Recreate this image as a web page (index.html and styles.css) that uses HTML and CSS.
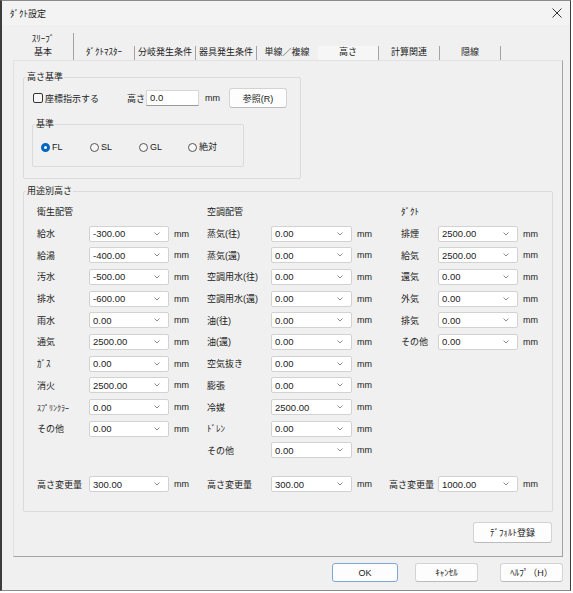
FILE: index.html
```html
<!DOCTYPE html>
<html lang="ja">
<head>
  <meta charset="UTF-8">
  <title>ﾀﾞｸﾄ設定</title>
  <link rel="stylesheet" href="styles.css">
</head>
<body>
<div class="window">
  <div class="titlebar">
    <span class="title">ﾀﾞｸﾄ設定</span>
    <svg class="close" width="10" height="10" viewBox="0 0 10 10">
      <path d="M0.5 0.5L9.5 9.5M9.5 0.5L0.5 9.5" stroke="#333" stroke-width="1" fill="none"/>
    </svg>
  </div>

  <div class="dialog">
    <div class="tabs">
      <div class="tab-row upper">
        <div class="tab">ｽﾘｰﾌﾞ</div>
      </div>
      <div class="tab-row lower">
        <div class="tab">基本</div>
        <div class="tab">ﾀﾞｸﾄﾏｽﾀｰ</div>
        <div class="tab">分岐発生条件</div>
        <div class="tab">器具発生条件</div>
        <div class="tab no-sep">単線／複線</div>
        <div class="tab active">高さ</div>
        <div class="tab">計算関連</div>
        <div class="tab">隠線</div>
      </div>
    </div>

    <div class="panel">
      <fieldset class="group base-group">
        <legend>高さ基準</legend>
        <div class="base-row">
          <label class="check"><span class="box"></span>座標指示する</label>
          <span class="height-label">高さ</span>
          <div class="text-input">0.0</div>
          <span class="unit wide">mm</span>
          <button class="btn ref-btn">参照(R)</button>
        </div>
        <fieldset class="group ref-group">
          <legend>基準</legend>
          <div class="radios">
            <span class="radio checked"><i></i>FL</span>
            <span class="radio"><i></i>SL</span>
            <span class="radio"><i></i>GL</span>
            <span class="radio"><i></i>絶対</span>
          </div>
        </fieldset>
      </fieldset>

      <fieldset class="group usage-group">
        <legend>用途別高さ</legend>
        <div class="columns">
          <div class="col col-1">
            <div class="row head">衛生配管</div>
            <div class="row"><span class="lbl">給水</span><div class="combo"><span>-300.00</span><svg width="6" height="4"><path d="M0.5 0.5L3 3L5.5 0.5" stroke="#8c8c8c" fill="none"/></svg></div><span class="unit">mm</span></div>
            <div class="row"><span class="lbl">給湯</span><div class="combo"><span>-400.00</span><svg width="6" height="4"><path d="M0.5 0.5L3 3L5.5 0.5" stroke="#8c8c8c" fill="none"/></svg></div><span class="unit">mm</span></div>
            <div class="row"><span class="lbl">汚水</span><div class="combo"><span>-500.00</span><svg width="6" height="4"><path d="M0.5 0.5L3 3L5.5 0.5" stroke="#8c8c8c" fill="none"/></svg></div><span class="unit">mm</span></div>
            <div class="row"><span class="lbl">排水</span><div class="combo"><span>-600.00</span><svg width="6" height="4"><path d="M0.5 0.5L3 3L5.5 0.5" stroke="#8c8c8c" fill="none"/></svg></div><span class="unit">mm</span></div>
            <div class="row"><span class="lbl">雨水</span><div class="combo"><span>0.00</span><svg width="6" height="4"><path d="M0.5 0.5L3 3L5.5 0.5" stroke="#8c8c8c" fill="none"/></svg></div><span class="unit">mm</span></div>
            <div class="row"><span class="lbl">通気</span><div class="combo"><span>2500.00</span><svg width="6" height="4"><path d="M0.5 0.5L3 3L5.5 0.5" stroke="#8c8c8c" fill="none"/></svg></div><span class="unit">mm</span></div>
            <div class="row"><span class="lbl">ｶﾞｽ</span><div class="combo"><span>0.00</span><svg width="6" height="4"><path d="M0.5 0.5L3 3L5.5 0.5" stroke="#8c8c8c" fill="none"/></svg></div><span class="unit">mm</span></div>
            <div class="row"><span class="lbl">消火</span><div class="combo"><span>2500.00</span><svg width="6" height="4"><path d="M0.5 0.5L3 3L5.5 0.5" stroke="#8c8c8c" fill="none"/></svg></div><span class="unit">mm</span></div>
            <div class="row"><span class="lbl small">ｽﾌﾟﾘﾝｸﾗｰ</span><div class="combo"><span>0.00</span><svg width="6" height="4"><path d="M0.5 0.5L3 3L5.5 0.5" stroke="#8c8c8c" fill="none"/></svg></div><span class="unit">mm</span></div>
            <div class="row"><span class="lbl">その他</span><div class="combo"><span>0.00</span><svg width="6" height="4"><path d="M0.5 0.5L3 3L5.5 0.5" stroke="#8c8c8c" fill="none"/></svg></div><span class="unit">mm</span></div>
          </div>

          <div class="col col-2">
            <div class="row head">空調配管</div>
            <div class="row"><span class="lbl">蒸気(往)</span><div class="combo"><span>0.00</span><svg width="6" height="4"><path d="M0.5 0.5L3 3L5.5 0.5" stroke="#8c8c8c" fill="none"/></svg></div><span class="unit">mm</span></div>
            <div class="row"><span class="lbl">蒸気(還)</span><div class="combo"><span>0.00</span><svg width="6" height="4"><path d="M0.5 0.5L3 3L5.5 0.5" stroke="#8c8c8c" fill="none"/></svg></div><span class="unit">mm</span></div>
            <div class="row"><span class="lbl">空調用水(往)</span><div class="combo"><span>0.00</span><svg width="6" height="4"><path d="M0.5 0.5L3 3L5.5 0.5" stroke="#8c8c8c" fill="none"/></svg></div><span class="unit">mm</span></div>
            <div class="row"><span class="lbl">空調用水(還)</span><div class="combo"><span>0.00</span><svg width="6" height="4"><path d="M0.5 0.5L3 3L5.5 0.5" stroke="#8c8c8c" fill="none"/></svg></div><span class="unit">mm</span></div>
            <div class="row"><span class="lbl">油(往)</span><div class="combo"><span>0.00</span><svg width="6" height="4"><path d="M0.5 0.5L3 3L5.5 0.5" stroke="#8c8c8c" fill="none"/></svg></div><span class="unit">mm</span></div>
            <div class="row"><span class="lbl">油(還)</span><div class="combo"><span>0.00</span><svg width="6" height="4"><path d="M0.5 0.5L3 3L5.5 0.5" stroke="#8c8c8c" fill="none"/></svg></div><span class="unit">mm</span></div>
            <div class="row"><span class="lbl">空気抜き</span><div class="combo"><span>0.00</span><svg width="6" height="4"><path d="M0.5 0.5L3 3L5.5 0.5" stroke="#8c8c8c" fill="none"/></svg></div><span class="unit">mm</span></div>
            <div class="row"><span class="lbl">膨張</span><div class="combo"><span>0.00</span><svg width="6" height="4"><path d="M0.5 0.5L3 3L5.5 0.5" stroke="#8c8c8c" fill="none"/></svg></div><span class="unit">mm</span></div>
            <div class="row"><span class="lbl">冷媒</span><div class="combo"><span>2500.00</span><svg width="6" height="4"><path d="M0.5 0.5L3 3L5.5 0.5" stroke="#8c8c8c" fill="none"/></svg></div><span class="unit">mm</span></div>
            <div class="row"><span class="lbl">ﾄﾞﾚﾝ</span><div class="combo"><span>0.00</span><svg width="6" height="4"><path d="M0.5 0.5L3 3L5.5 0.5" stroke="#8c8c8c" fill="none"/></svg></div><span class="unit">mm</span></div>
            <div class="row"><span class="lbl">その他</span><div class="combo"><span>0.00</span><svg width="6" height="4"><path d="M0.5 0.5L3 3L5.5 0.5" stroke="#8c8c8c" fill="none"/></svg></div><span class="unit">mm</span></div>
          </div>

          <div class="col col-3">
            <div class="row head">ﾀﾞｸﾄ</div>
            <div class="row"><span class="lbl">排煙</span><div class="combo"><span>2500.00</span><svg width="6" height="4"><path d="M0.5 0.5L3 3L5.5 0.5" stroke="#8c8c8c" fill="none"/></svg></div><span class="unit">mm</span></div>
            <div class="row"><span class="lbl">給気</span><div class="combo"><span>2500.00</span><svg width="6" height="4"><path d="M0.5 0.5L3 3L5.5 0.5" stroke="#8c8c8c" fill="none"/></svg></div><span class="unit">mm</span></div>
            <div class="row"><span class="lbl">還気</span><div class="combo"><span>0.00</span><svg width="6" height="4"><path d="M0.5 0.5L3 3L5.5 0.5" stroke="#8c8c8c" fill="none"/></svg></div><span class="unit">mm</span></div>
            <div class="row"><span class="lbl">外気</span><div class="combo"><span>0.00</span><svg width="6" height="4"><path d="M0.5 0.5L3 3L5.5 0.5" stroke="#8c8c8c" fill="none"/></svg></div><span class="unit">mm</span></div>
            <div class="row"><span class="lbl">排気</span><div class="combo"><span>0.00</span><svg width="6" height="4"><path d="M0.5 0.5L3 3L5.5 0.5" stroke="#8c8c8c" fill="none"/></svg></div><span class="unit">mm</span></div>
            <div class="row"><span class="lbl">その他</span><div class="combo"><span>0.00</span><svg width="6" height="4"><path d="M0.5 0.5L3 3L5.5 0.5" stroke="#8c8c8c" fill="none"/></svg></div><span class="unit">mm</span></div>
          </div>
        </div>

        <div class="change-row">
          <div class="row change-1"><span class="lbl">高さ変更量</span><div class="combo"><span>300.00</span><svg width="6" height="4"><path d="M0.5 0.5L3 3L5.5 0.5" stroke="#8c8c8c" fill="none"/></svg></div><span class="unit">mm</span></div>
          <div class="row change-2"><span class="lbl">高さ変更量</span><div class="combo"><span>300.00</span><svg width="6" height="4"><path d="M0.5 0.5L3 3L5.5 0.5" stroke="#8c8c8c" fill="none"/></svg></div><span class="unit">mm</span></div>
          <div class="row change-3"><span class="lbl">高さ変更量</span><div class="combo"><span>1000.00</span><svg width="6" height="4"><path d="M0.5 0.5L3 3L5.5 0.5" stroke="#8c8c8c" fill="none"/></svg></div><span class="unit">mm</span></div>
        </div>
      </fieldset>

      <div class="panel-foot">
        <button class="btn default-btn">ﾃﾞﾌｫﾙﾄ登録</button>
      </div>
    </div>

    <div class="dialog-buttons">
      <button class="btn ok-btn">OK</button>
      <button class="btn cancel-btn">ｷｬﾝｾﾙ</button>
      <button class="btn help-btn">ﾍﾙﾌﾟ（H）</button>
    </div>
  </div>
</div>
</body>
</html>
```

FILE: styles.css
```css
* {
  margin: 0;
  padding: 0;
  box-sizing: border-box;
}

body {
  margin: 0;
  background: #ffffff;
  font-family: "Liberation Sans", "Noto Sans CJK JP", sans-serif;
  font-size: 9px;
  color: #222;
}

.window {
  width: 571px;
  height: 591px;
  background: #f0f0f0;
  border: 1px solid #8a8a8a;
  border-left: 2px solid #3c3c3c;
  border-right-color: #3c3c3c;
  display: flex;
  flex-direction: column;
}

.titlebar {
  height: 24px;
  flex-shrink: 0;
  display: flex;
  align-items: center;
  justify-content: space-between;
  padding: 0 8px;
  background: #f3f3f3;
}

.close {
  display: block;
}

.dialog {
  flex: 1;
  display: flex;
  flex-direction: column;
  padding: 8px 7px 0 11px;
}

/* tabs */
.tab-row {
  display: flex;
}

.tab-row.upper {
  height: 13px;
}

.tab-row.lower {
  height: 14px;
}

.tab {
  width: 61px;
  text-align: center;
  line-height: 12px;
  border-right: 1px solid #a3a3a3;
}

.tab-row.lower .tab {
  line-height: 13px;
}

.tab.no-sep {
  border-right-color: transparent;
}

.tab.active {
  background: #f6f6f6;
}

/* panel */
.panel {
  height: 497px;
  display: flex;
  flex-direction: column;
  border: 1px solid #e2e2e2;
  border-right-color: #a3a3a3;
  border-bottom-color: #a3a3a3;
  padding: 10px 9px 0;
}

fieldset.group {
  border: 1px solid #dadada;
  border-radius: 2px;
  padding: 0;
  min-width: 0;
}

legend {
  margin-left: 2px;
  padding: 0 1px;
  line-height: 12px;
}

.base-group {
  width: 278px;
  padding-bottom: 11px !important;
}

.base-row {
  display: flex;
  align-items: center;
  height: 20px;
  margin-top: 5px;
  padding-left: 9px;
}

.check {
  width: 94px;
  display: flex;
  align-items: center;
}

.box {
  width: 10px;
  height: 10px;
  margin-right: 2px;
  border: 1px solid #333;
  border-radius: 2px;
  background: #f6f6f6;
}

.height-label {
  width: 19px;
}

.text-input {
  width: 53px;
  height: 16px;
  padding: 0 3px;
  line-height: 14px;
  font-size: 9.5px;
  background: #fff;
  border: 1px solid #d6d6d6;
  border-bottom-color: #9a9a9a;
}

.unit {
  margin-left: 5px;
}

.unit.wide {
  margin-left: 6px;
  width: 24px;
}

.ref-group {
  width: 212px;
  margin: 10px 0 0 8px;
}

.radios {
  display: flex;
  padding: 11px 0 13px 8px;
}

.radio {
  width: 49px;
  display: flex;
  align-items: center;
  line-height: 12px;
}

.radio i {
  width: 9px;
  height: 9px;
  margin-right: 2px;
  border: 1px solid #555;
  border-radius: 50%;
  background: #f6f6f6;
}

.radio.checked i {
  border: 3px solid #0067c0;
  background: #fff;
}

/* usage heights */
.usage-group {
  margin-top: 6px;
  padding: 4px 0 16px 0 !important;
}

.columns {
  display: flex;
  padding-left: 13px;
}

.col {
  display: grid;
  grid-auto-rows: 21.7px;
}

.col-1 {
  width: 170px;
  --lw: 52px;
}

.col-2 {
  width: 194px;
  --lw: 64px;
}

.col-3 {
  --lw: 37px;
}

.row {
  display: flex;
  align-items: center;
}

.row .lbl {
  width: var(--lw);
  white-space: nowrap;
}

.lbl.small {
  font-size: 8px;
}

.combo {
  width: 80px;
  height: 16px;
  display: flex;
  align-items: center;
  justify-content: space-between;
  padding: 0 8px 0 3px;
  font-size: 9.5px;
  background: #fff;
  border: 1px solid #d2d2d2;
  border-radius: 2px;
}

.col-2 .combo,
.change-2 .combo {
  width: 81px;
}

.combo svg {
  display: block;
}

.change-row {
  display: flex;
  height: 21.7px;
  margin-top: 12px;
  padding-left: 13px;
}

.change-1 {
  width: 170px;
  --lw: 52px;
}

.change-2 {
  width: 182px;
  --lw: 64px;
}

.change-3 {
  --lw: 49px;
}

.panel-foot {
  display: flex;
  justify-content: flex-end;
  margin-top: auto;
  padding: 0 1px 13px 0;
}

/* buttons */
.btn {
  font: inherit;
  color: #222;
  background: #fdfdfd;
  border: 1px solid #d3d3d3;
  border-bottom-color: #bcbcbc;
  border-radius: 3px;
}

.ref-btn {
  width: 58px;
  height: 20px;
}

.default-btn {
  width: 79px;
  height: 21px;
}

.dialog-buttons {
  display: flex;
  justify-content: flex-end;
  margin-top: 6px;
}

.dialog-buttons .btn {
  width: 63px;
  height: 19px;
}

.dialog-buttons .ok-btn {
  width: 66px;
  margin-right: 17px;
  border-color: #7ea6d8;
}

.dialog-buttons .cancel-btn {
  margin-right: 22px;
}
```
